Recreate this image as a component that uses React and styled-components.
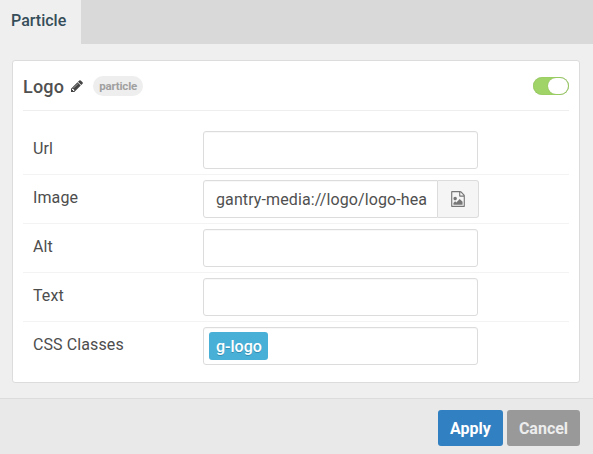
import React from "react";
import styled, { createGlobalStyle } from "styled-components";

const GlobalStyle = createGlobalStyle`
  *, *::before, *::after { box-sizing: border-box; }
  body {
    margin: 0;
    background: #efefef;
    color: #4a4a4a;
    font-family: Roboto, "Liberation Sans", sans-serif;
    font-size: 16px;
    line-height: 24px;
    overflow: hidden;
  }
`;

const Page = styled.div`
  display: flex;
  flex-direction: column;
  height: 454px;
`;

const TabBar = styled.nav`
  display: flex;
  height: 44px;
  background: #d9d9d9;
`;

const Tab = styled.a`
  width: 81px;
  padding: 9px 0 0 11px;
  background: #efefef;
  color: #354d59;
  font-weight: 500;
`;

const Card = styled.section`
  width: 568px;
  height: 323px;
  margin: 16px 0 0 12px;
  padding: 0 10px;
  background: #fff;
  border: 1px solid #dcdcdc;
  border-radius: 3px;
`;

const CardHeader = styled.header`
  display: flex;
  align-items: center;
  height: 50px;
  border-bottom: 1px solid #eee;
`;

const Title = styled.h4`
  margin: 3px 6px 0 0;
  font-size: 18px;
  font-weight: 500;
  letter-spacing: 0.2px;
  color: #505050;
`;

const PencilIcon = styled.svg`
  width: 14px;
  height: 14px;
  margin-top: 1px;
  fill: #444;
`;

const Badge = styled.span`
  margin-left: 9px;
  width: 50px;
  height: 20px;
  border-radius: 10px;
  background: #eee;
  color: #a0a0a0;
  font-size: 11.5px;
  font-weight: 700;
  letter-spacing: -0.2px;
  line-height: 20px;
  text-align: center;
`;

const Toggle = styled.span`
  display: flex;
  justify-content: flex-end;
  width: 36px;
  height: 18px;
  margin-left: auto;
  padding: 1px;
  border-radius: 9px;
  background: #a0d468;
  box-shadow: inset 0 0 1px #6f9f3c;
`;

const Knob = styled.span`
  width: 20px;
  height: 16px;
  border-radius: 8px;
  background: #fff;
  box-shadow: 0 0 1px 0 #7da650;
`;

const Fields = styled.div`
  padding-top: 15px;
`;

const Row = styled.div`
  display: flex;
  height: 49px;
  padding: 5px 0 0 10px;
  border-bottom: ${(p) => (p.$last ? "0" : "1px solid #f3f3f3")};
`;

const Label = styled.span`
  width: 170px;
  padding-top: 6px;
  letter-spacing: 0.1px;
  color: #4d4d4d;
`;

const Field = styled.div`
  display: flex;
  align-items: center;
  width: ${(p) => (p.$grouped ? "235px" : "275px")};
  height: 38px;
  padding: ${(p) => (p.$tags ? "0 5px" : "0 9px 0 12px")};
  border: 1px solid #dcdcdc;
  border-radius: ${(p) => (p.$grouped ? "3px 0 0 3px" : "3px")};
  background: #fff;
  box-shadow: inset 0 1px 1px rgba(0, 0, 0, 0.03);
`;

const Value = styled.span`
  padding-top: 2px;
  letter-spacing: 0.11px;
  white-space: nowrap;
  color: #505050;
`;

const Addon = styled.button`
  display: flex;
  align-items: center;
  justify-content: center;
  width: 41px;
  height: 38px;
  padding: 0;
  border: 1px solid #dcdcdc;
  border-left: 0;
  border-radius: 0 3px 3px 0;
  background: #f5f5f5;
`;

const FileImageIcon = styled.svg`
  width: 16px;
  height: 16px;
  fill: #777;
`;

const Tag = styled.span`
  width: 59px;
  height: 28px;
  padding: 1px 0 0 7px;
  border-radius: 3px;
  background: #48b0d7;
  color: #fff;
  font-weight: 500;
  line-height: 28px;
  text-shadow: 0 1px 0 rgba(0, 51, 83, 0.3);
`;

const Footer = styled.footer`
  display: flex;
  justify-content: flex-end;
  gap: 4px;
  height: 56px;
  margin-top: 15px;
  padding: 11px 13px 0 0;
  border-top: 1px solid #dcdcdc;
  background: #e9e9e9;
`;

const Button = styled.button`
  width: ${(p) => (p.$primary ? "65px" : "73px")};
  height: 36px;
  padding: 1px 0 0;
  border: 0;
  border-radius: 3px;
  background: ${(p) => (p.$primary ? "#3180c2" : "#999")};
  color: ${(p) => (p.$primary ? "#fff" : "#ededed")};
  font: 700 16px/35px Roboto, "Liberation Sans", sans-serif;
`;

export default function App() {
  return (
    <Page>
      <GlobalStyle />
      <TabBar>
        <Tab>Particle</Tab>
      </TabBar>
      <Card>
        <CardHeader>
          <Title>Logo</Title>
          <PencilIcon viewBox="0 0 1792 1792">
            <path d="M491 1536l91-91-235-235-91 91v107h128v128h107zm523-928q0-22-22-22-10 0-17 7l-542 542q-7 7-7 17 0 22 22 22 10 0 17-7l542-542q7-7 7-17zm-54-192l416 416-832 832h-416v-416zm683 96q0 53-37 90l-166 166-416-416 166-165q36-38 90-38 53 0 91 38l235 234q37 39 37 91z" />
          </PencilIcon>
          <Badge>particle</Badge>
          <Toggle>
            <Knob />
          </Toggle>
        </CardHeader>
        <Fields>
          <Row>
            <Label>Url</Label>
            <Field />
          </Row>
          <Row>
            <Label>Image</Label>
            <Field $grouped>
              <Value>gantry-media://logo/logo-hea</Value>
            </Field>
            <Addon>
              <FileImageIcon viewBox="0 0 1792 1792">
                <path d="M1596 380q28 28 48 76t20 88v1152q0 40-28 68t-68 28h-1344q-40 0-68-28t-28-68v-1600q0-40 28-68t68-28h896q40 0 88 20t76 48zm-444-244v376h376q-10-29-22-41l-313-313q-12-12-41-22zm384 1528v-1024h-416q-40 0-68-28t-28-68v-416h-768v1536h1280zm-128-448v320h-1024v-192l192-192 128 128 384-384zm-832-192q-80 0-136-56t-56-136 56-136 136-56 136 56 56 136-56 136-136 56z" />
              </FileImageIcon>
            </Addon>
          </Row>
          <Row>
            <Label>Alt</Label>
            <Field />
          </Row>
          <Row>
            <Label>Text</Label>
            <Field />
          </Row>
          <Row $last>
            <Label>CSS Classes</Label>
            <Field $tags>
              <Tag>g-logo</Tag>
            </Field>
          </Row>
        </Fields>
      </Card>
      <Footer>
        <Button $primary>Apply</Button>
        <Button>Cancel</Button>
      </Footer>
    </Page>
  );
}
